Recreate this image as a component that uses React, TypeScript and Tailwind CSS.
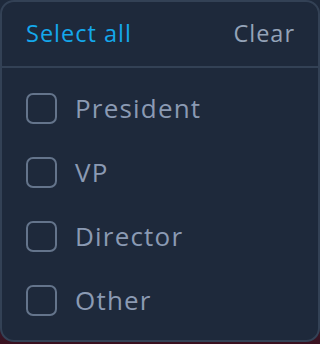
import React, { useState } from "react";

const roles = ["President", "VP", "Director", "Other"];

export default function App() {
  const [picked, setPicked] = useState<string[]>([]);

  const toggle = (role: string) =>
    setPicked((p) => (p.includes(role) ? p.filter((r) => r !== role) : [...p, role]));

  return (
    <div
      className="h-[344px] w-[320px] bg-gradient-to-b from-[#1e293b] via-[#1e293b] via-85% to-[#3a1020]"
      style={{ fontFamily: "'Open Sans', sans-serif" }}
    >
      <div className="h-[342px] w-[320px] overflow-hidden rounded-[14px] border-2 border-[#334155] bg-[#1e293b]">
        {/* header */}
        <div className="flex h-[66px] items-center justify-between border-b-2 border-[#334155] pl-[24px] pr-[24px]">
          <button
            onClick={() => setPicked(roles)}
            className="text-[23.5px] tracking-[1px] text-[#14a8ec]"
          >
            Select all
          </button>
          <button
            onClick={() => setPicked([])}
            className="-mr-[1px] text-[23.5px] tracking-[1px] text-[#94a3b8]"
          >
            Clear
          </button>
        </div>

        {/* options */}
        <div className="flex flex-col pt-[8px]">
          {roles.map((role) => (
            <label
              key={role}
              className="flex h-[64px] cursor-pointer items-center gap-[18px] pl-[24px]"
            >
              <input
                type="checkbox"
                checked={picked.includes(role)}
                onChange={() => toggle(role)}
                className="h-[31px] w-[31px] appearance-none rounded-[7px] border-2 border-[#64748b] bg-transparent checked:bg-[#14a8ec]"
              />
              <span className="text-[26px] tracking-[1.2px] text-[#8b9ab3]">{role}</span>
            </label>
          ))}
        </div>
      </div>
    </div>
  );
}
